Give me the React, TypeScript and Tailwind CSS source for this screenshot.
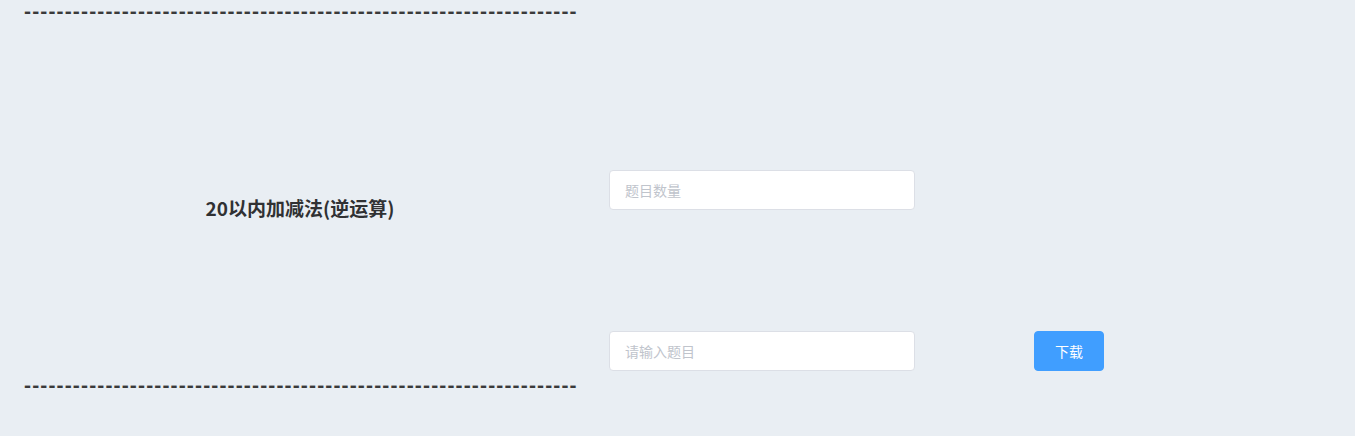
const dashes = "-".repeat(68);

function DashLine() {
  return (
    <div
      className="whitespace-nowrap text-[21px] font-bold leading-[22px] tracking-[1.15px] text-[#3a3a3a] h-[22px]"
      style={{ fontFamily: '"Liberation Sans", sans-serif' }}
    >
      {dashes}
    </div>
  );
}

export default function App() {
  return (
    <div
      className="w-full h-[436px] bg-[#e9eef3] overflow-hidden flex"
      style={{ fontFamily: '"Noto Sans CJK SC", "Noto Sans", sans-serif' }}
    >
      {/* left: title box */}
      <div className="ml-[24px] w-[552px] flex flex-col">
        <DashLine />
        <div className="h-[352px] flex items-center justify-center pt-[20px]">
          <h2 className="text-[19px] font-bold text-[#303133]">20以内加减法(逆运算)</h2>
        </div>
        <DashLine />
      </div>

      {/* right: form */}
      <div className="ml-[33px] flex flex-col pt-[170px]">
        <input
          placeholder="题目数量"
          className="w-[306px] h-[40px] px-[15px] bg-white border border-[#dcdfe6] rounded-[4px] text-[14px] text-[#606266] placeholder:text-[#c0c4cc] outline-none"
        />
        <div className="flex items-center mt-[121px]">
          <input
            placeholder="请输入题目"
            className="w-[306px] h-[40px] px-[15px] bg-white border border-[#dcdfe6] rounded-[4px] text-[14px] text-[#606266] placeholder:text-[#c0c4cc] outline-none"
          />
          <button className="ml-[119px] w-[70px] h-[40px] bg-[#409eff] border border-[#409eff] rounded-[4px] text-white text-[14px]">
            下载
          </button>
        </div>
      </div>
    </div>
  );
}
